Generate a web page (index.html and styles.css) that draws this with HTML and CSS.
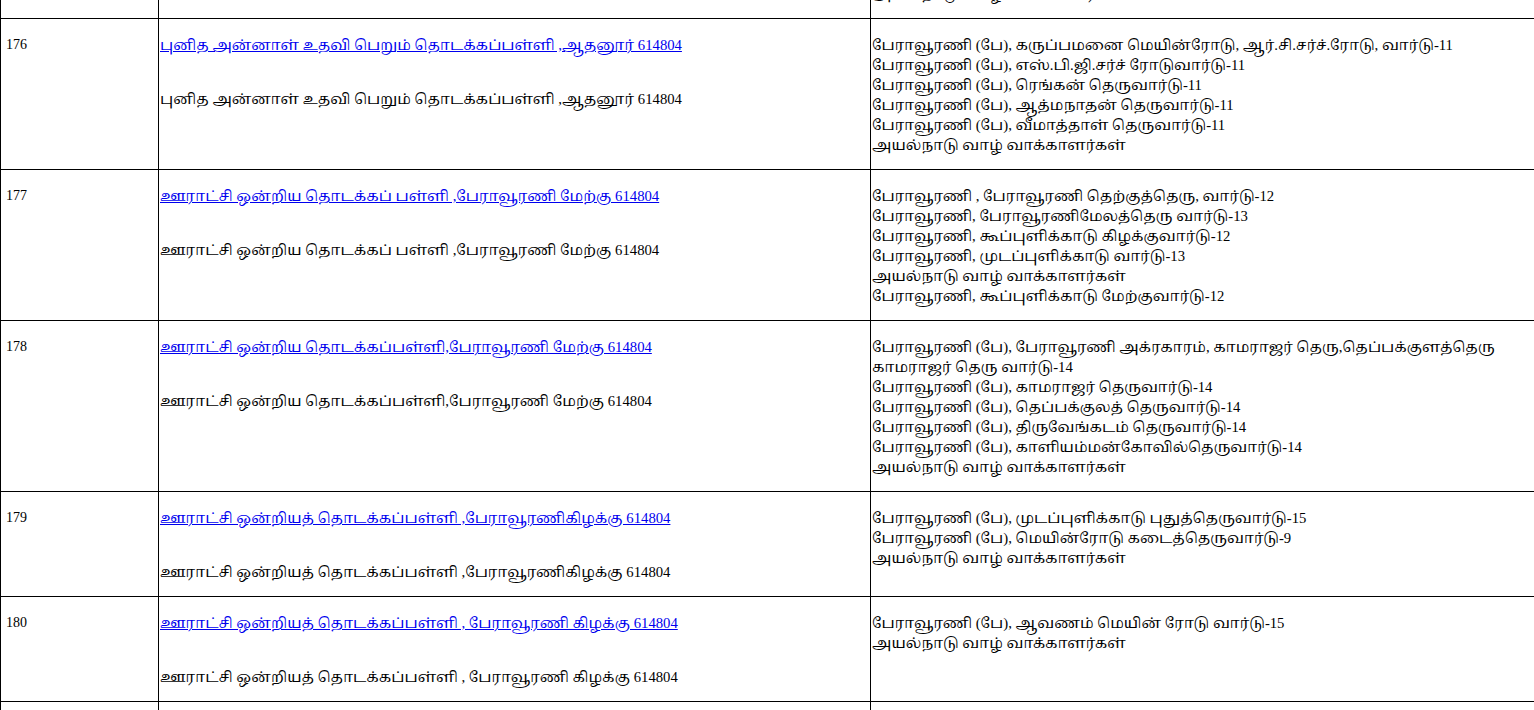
FILE: index.html
```html
<!DOCTYPE html>
<html lang="ta">
<head>
<meta charset="utf-8">
<title>Polling stations</title>
<link rel="stylesheet" href="styles.css">
</head>
<body>
<div class="viewport">
<table class="stations">
<colgroup><col class="c-no"><col class="c-name"><col class="c-area"></colgroup>
<tbody>
<tr class="cut">
<td class="no"></td>
<td class="name"></td>
<td class="area"><div>அயல்நாடு வாழ் வாக்காளர்கள்</div></td>
</tr>
<tr>
<td class="no">176</td>
<td class="name"><a href="#">புனித அன்னாள் உதவி பெறும் தொடக்கப்பள்ளி ,ஆதனூர் 614804</a><div class="plain">புனித அன்னாள் உதவி பெறும் தொடக்கப்பள்ளி ,ஆதனூர் 614804</div></td>
<td class="area">
<div>பேராவூரணி (பே), கருப்பமனை மெயின்ரோடு, ஆர்.சி.சர்ச்.ரோடு, வார்டு-11</div>
<div>பேராவூரணி (பே), எஸ்.பி.ஜி.சர்ச் ரோடுவார்டு-11</div>
<div>பேராவூரணி (பே), ரெங்கன் தெருவார்டு-11</div>
<div>பேராவூரணி (பே), ஆத்மநாதன் தெருவார்டு-11</div>
<div>பேராவூரணி (பே), வீமாத்தாள் தெருவார்டு-11</div>
<div>அயல்நாடு வாழ் வாக்காளர்கள்</div>
</td>
</tr>
<tr>
<td class="no">177</td>
<td class="name"><a href="#">ஊராட்சி ஒன்றிய தொடக்கப் பள்ளி ,பேராவூரணி மேற்கு 614804</a><div class="plain">ஊராட்சி ஒன்றிய தொடக்கப் பள்ளி ,பேராவூரணி மேற்கு 614804</div></td>
<td class="area">
<div>பேராவூரணி , பேராவூரணி தெற்குத்தெரு, வார்டு-12</div>
<div>பேராவூரணி, பேராவூரணிமேலத்தெரு வார்டு-13</div>
<div>பேராவூரணி, கூப்புளிக்காடு கிழக்குவார்டு-12</div>
<div>பேராவூரணி, முடப்புளிக்காடு வார்டு-13</div>
<div>அயல்நாடு வாழ் வாக்காளர்கள்</div>
<div>பேராவூரணி, கூப்புளிக்காடு மேற்குவார்டு-12</div>
</td>
</tr>
<tr>
<td class="no">178</td>
<td class="name"><a href="#">ஊராட்சி ஒன்றிய தொடக்கப்பள்ளி,பேராவூரணி மேற்கு 614804</a><div class="plain">ஊராட்சி ஒன்றிய தொடக்கப்பள்ளி,பேராவூரணி மேற்கு 614804</div></td>
<td class="area">
<div>பேராவூரணி (பே), பேராவூரணி அக்ரகாரம், காமராஜர் தெரு,தெப்பக்குளத்தெரு காமராஜர் தெரு வார்டு-14</div>
<div>பேராவூரணி (பே), காமராஜர் தெருவார்டு-14</div>
<div>பேராவூரணி (பே), தெப்பக்குலத் தெருவார்டு-14</div>
<div>பேராவூரணி (பே), திருவேங்கடம் தெருவார்டு-14</div>
<div>பேராவூரணி (பே), காளியம்மன்கோவில்தெருவார்டு-14</div>
<div>அயல்நாடு வாழ் வாக்காளர்கள்</div>
</td>
</tr>
<tr>
<td class="no">179</td>
<td class="name"><a href="#">ஊராட்சி ஒன்றியத் தொடக்கப்பள்ளி ,பேராவூரணிகிழக்கு 614804</a><div class="plain">ஊராட்சி ஒன்றியத் தொடக்கப்பள்ளி ,பேராவூரணிகிழக்கு 614804</div></td>
<td class="area">
<div>பேராவூரணி (பே), முடப்புளிக்காடு புதுத்தெருவார்டு-15</div>
<div>பேராவூரணி (பே), மெயின்ரோடு கடைத்தெருவார்டு-9</div>
<div>அயல்நாடு வாழ் வாக்காளர்கள்</div>
</td>
</tr>
<tr>
<td class="no">180</td>
<td class="name"><a href="#">ஊராட்சி ஒன்றியத் தொடக்கப்பள்ளி , பேராவூரணி கிழக்கு 614804</a><div class="plain">ஊராட்சி ஒன்றியத் தொடக்கப்பள்ளி , பேராவூரணி கிழக்கு 614804</div></td>
<td class="area">
<div>பேராவூரணி (பே), ஆவணம் மெயின் ரோடு வார்டு-15</div>
<div>அயல்நாடு வாழ் வாக்காளர்கள்</div>
</td>
</tr>
<tr class="tail">
<td class="no"></td>
<td class="name"></td>
<td class="area"></td>
</tr>
</tbody>
</table>
</div>
</body>
</html>
```

FILE: styles.css
```css
html, body {
  margin: 0;
  padding: 0;
  background: #fff;
}
.viewport {
  width: 1534px;
  height: 710px;
  overflow: hidden;
}
.stations {
  border-collapse: collapse;
  table-layout: fixed;
  width: 1620px;
  margin-top: -17px;
  font-family: "Liberation Serif", "Latha", "Noto Serif Tamil", "Noto Sans Tamil", "Lohit Tamil", serif;
  font-size: 14.7px;
  line-height: 20px;
  color: #000;
}
.c-no { width: 158px; }
.c-name { width: 712px; }
.c-area { width: 750px; }
.stations td {
  border: 1px solid #000;
  vertical-align: top;
  padding: 16px 0 14px 1px;
}
.stations td.area {
  padding-right: 100px;
}
.stations td.no {
  padding-left: 5px;
  font-size: 14px;
}
.stations tr.cut td {
  padding-top: 0;
}
.stations tr.tail td {
  height: 40px;
}
.stations a {
  color: #0000ee;
  text-decoration: underline;
}
.plain {
  margin-top: 34px;
}
```
